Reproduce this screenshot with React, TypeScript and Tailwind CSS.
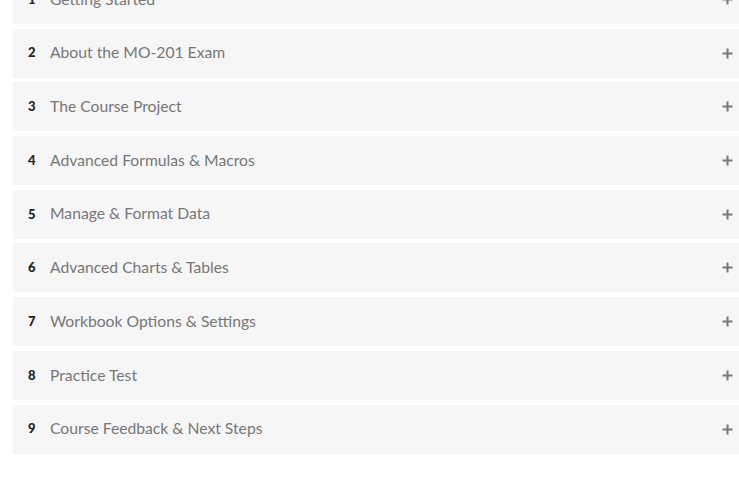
const SECTIONS = [
  "Getting Started",
  "About the MO-201 Exam",
  "The Course Project",
  "Advanced Formulas & Macros",
  "Manage & Format Data",
  "Advanced Charts & Tables",
  "Workbook Options & Settings",
  "Practice Test",
  "Course Feedback & Next Steps",
];

export default function App() {
  return (
    <div className="min-h-screen bg-white overflow-hidden" style={{ fontFamily: "Lato, 'Open Sans', sans-serif" }}>
      <div className="pl-[13px] mt-[-25px] flex flex-col gap-[4.7px]">
        {SECTIONS.map((title, i) => (
          <div
            key={title}
            className="h-[49px] bg-[#f6f6f6] flex items-center pl-[15px] pr-[6px]"
          >
            <span className="w-[22px] text-[13px] font-black text-[#222]">{i + 1}</span>
            <span className="flex-1 text-[15.7px] text-[#777]">{title}</span>
            <svg width="11" height="11" viewBox="0 0 11 11">
              <path d="M5.5 0.5v10M0.5 5.5h10" stroke="#777" strokeWidth="2" />
            </svg>
          </div>
        ))}
      </div>
    </div>
  );
}
